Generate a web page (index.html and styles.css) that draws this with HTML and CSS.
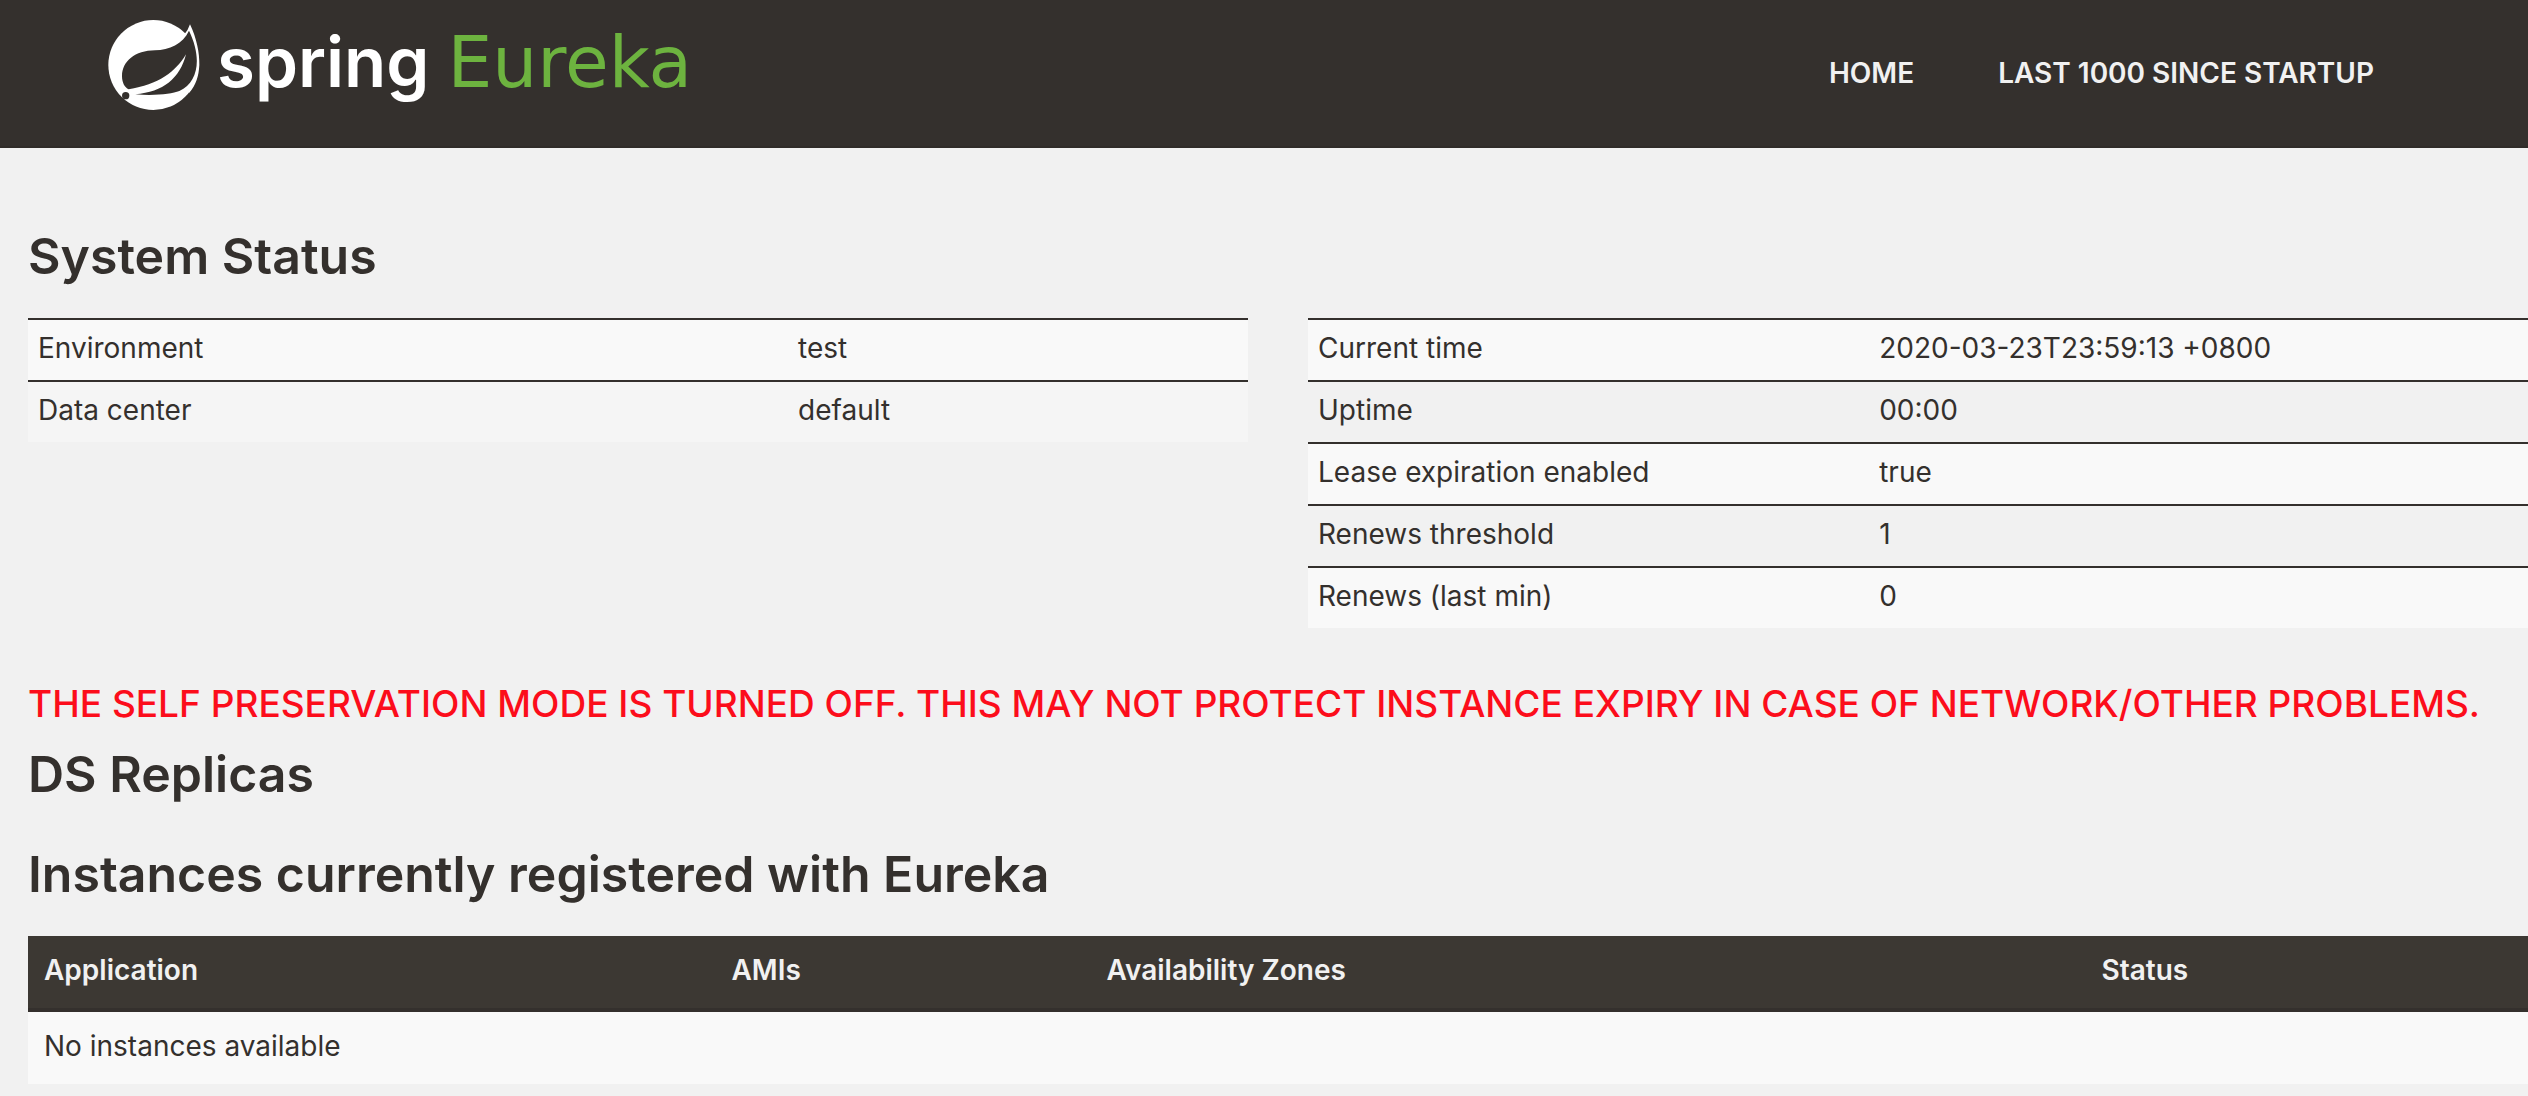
FILE: index.html
```html
<!DOCTYPE html>
<html lang="en">
<head>
    <meta charset="UTF-8">
    <meta name="viewport" content="width=device-width, initial-scale=1.0">
    <title>Eureka</title>
    <link rel="stylesheet" href="styles.css">
</head>
<body>
    <header class="navbar">
        <a class="brand" href="#" aria-label="Spring Eureka">
            <svg class="brand-leaf" viewBox="24 27 276 276" aria-hidden="true">
                <circle cx="160" cy="165" r="135" fill="#fff"/>
                <path fill="#fff" d="M252 74Q264 62 270 43C290 85 299 130 298 165C296 200 288 225 268 248L160 165Z"/>
                <path fill="#34302d" d="M267 62C248 102 208 120 165 121C105 121 66 155 66 198C66 218 74 232 86 238C175 224 228 185 258 133C240 205 190 246 106 253C170 258 215 251 238 243C298 215 305 140 267 62Z"/>
                <circle cx="77" cy="257" r="11" fill="#34302d"/>
            </svg>
            <span class="brand-spring">spring</span>
            <span class="brand-eureka">Eureka</span>
        </a>
        <nav class="nav">
            <a href="#">HOME</a>
            <a href="#">LAST 1000 SINCE STARTUP</a>
        </nav>
    </header>

    <main class="content">
        <h1>System Status</h1>
        <div class="status-row">
            <table class="status environment">
                <tr><td>Environment</td><td>test</td></tr>
                <tr><td>Data center</td><td>default</td></tr>
            </table>
            <table class="status striped">
                <tr><td>Current time</td><td>2020-03-23T23:59:13 +0800</td></tr>
                <tr><td>Uptime</td><td>00:00</td></tr>
                <tr><td>Lease expiration enabled</td><td>true</td></tr>
                <tr><td>Renews threshold</td><td>1</td></tr>
                <tr><td>Renews (last min)</td><td>0</td></tr>
            </table>
        </div>

        <h4 class="warning">THE SELF PRESERVATION MODE IS TURNED OFF. THIS MAY NOT PROTECT INSTANCE EXPIRY IN CASE OF NETWORK/OTHER PROBLEMS.</h4>

        <h1>DS Replicas</h1>

        <h1>Instances currently registered with Eureka</h1>
        <table class="instances">
            <thead>
                <tr>
                    <th class="col-app">Application</th>
                    <th class="col-amis">AMIs</th>
                    <th class="col-zones">Availability Zones</th>
                    <th>Status</th>
                </tr>
            </thead>
            <tbody>
                <tr><td colspan="4">No instances available</td></tr>
            </tbody>
        </table>
    </main>
</body>
</html>
```
FILE: styles.css
```css
body {
    margin: 0;
    background-color: #f1f1f1;
    color: #34302d;
    font-family: Inter, "Open Sans", sans-serif;
    font-size: 28px;
    line-height: 40px;
}

/* Top bar */
.navbar {
    display: flex;
    justify-content: space-between;
    box-sizing: border-box;
    height: 148px;
    padding: 0 108px;
    background-color: #34302d;
    border-bottom: 2px solid #302c29;
}

.brand {
    display: flex;
    align-items: baseline;
    padding-top: 19px;
    line-height: 86px;
    text-decoration: none;
}

.brand-leaf {
    align-self: flex-start;
    width: 92px;
    height: 92px;
    margin-right: 17px;
}

.brand-spring {
    margin-right: 18px;
    color: #fff;
    font-size: 69px;
    font-weight: 600;
}

.brand-eureka {
    color: #6db33f;
    font-family: "DejaVu Sans", sans-serif;
    font-size: 71px;
}

.nav {
    display: flex;
    align-items: center;
    gap: 84px;
    padding-right: 46px;
}

.nav a {
    color: #f1f1f1;
    font-weight: 600;
    text-decoration: none;
}

/* Page */
.content {
    padding: 36px 0 0 28px;
}

h1 {
    margin: 44px 0 34px;
    font-size: 50px;
    font-weight: 600;
    line-height: 56px;
}

.warning {
    margin: 54px 0 20px;
    color: #fc0d1b;
    font-size: 37px;
    font-weight: 500;
    line-height: 44px;
}

.warning + h1 {
    margin-top: 20px;
}

table {
    width: 100%;
    border-collapse: separate;
    border-spacing: 0;
    table-layout: fixed;
}

th,
td {
    box-sizing: border-box;
}

.status-row {
    display: grid;
    grid-template-columns: 1fr 1fr;
    align-items: start;
    gap: 60px;
}

.status td {
    padding: 8px 10px 12px;
    border-top: 2px solid #34302d;
}

.status tr:nth-child(odd) {
    background-color: #f9f9f9;
}

.environment tr:nth-child(even) {
    background-color: #f5f5f5;
}

.environment td:first-child {
    width: 62.3%;
}

.striped td:first-child {
    width: 46%;
}

/* Registered instances */
.instances th,
.instances td {
    padding: 14px 16px 18px;
    text-align: left;
}

.instances th {
    background-color: #3c3833;
    border-bottom: 4px solid #34302d;
    color: #f1f1f1;
    font-weight: 600;
}

.instances td {
    background-color: #f9f9f9;
}

.col-app {
    width: 27.5%;
}

.col-amis {
    width: 15%;
}

.col-zones {
    width: 39.8%;
}
```
